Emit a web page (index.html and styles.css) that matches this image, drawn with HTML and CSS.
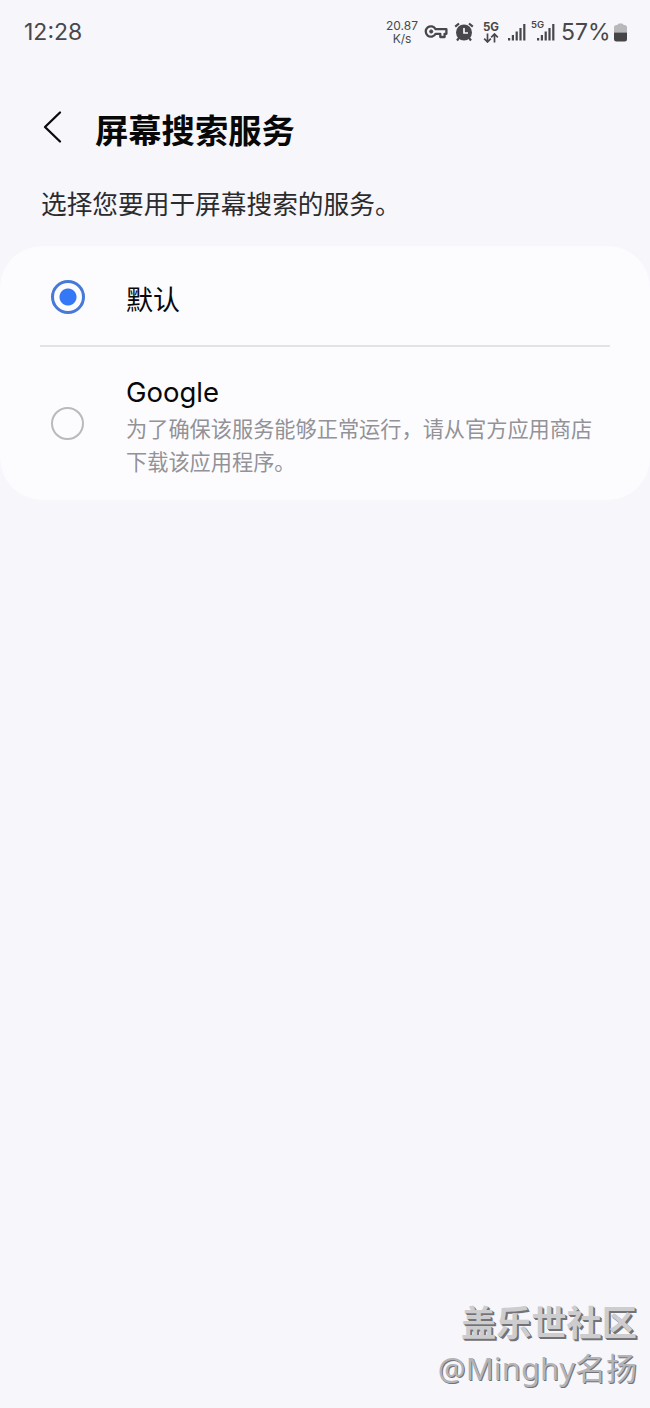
FILE: index.html
```html
<!DOCTYPE html>
<html lang="zh-CN">
<head>
<meta charset="utf-8">
<title>屏幕搜索服务</title>
<link rel="stylesheet" href="styles.css">
</head>
<body>
<div class="screen">
  <header class="status">
    <span class="clock">12:28</span>
    <div class="indicators">
      <div class="speed"><span>20.87</span><span>K/s</span></div>
      <svg class="key" width="24" height="16" viewBox="0 0 24 16" fill="none" stroke="#48484b" stroke-width="2.3">
        <path d="M11.600 5.2H22.4V9.8H20.6V13H16.3V9.8H11.600A5.2 5.2 0 1 1 11.600 5.2Z" stroke-linejoin="round"/>
        <circle cx="7.200" cy="7.5" r="1.6" fill="#48484b" stroke-width="1"/>
      </svg>
      <svg class="alarm" width="20" height="20" viewBox="0 0 20 20" fill="none" stroke="#48484b">
        <circle cx="10" cy="10.500" r="8" fill="#48484b" stroke="none"/>
        <path d="M1.2 4.6 5 1.5M18.8 4.6 15 1.5M5 15.8 3 18.5M15 15.8 17 18.5" stroke-width="2.2"/>
        <path d="M10 6V11H14" stroke="#f6f6fb" stroke-width="1.7"/>
      </svg>
      <div class="network">
        <span>5G</span>
        <svg width="16" height="10" viewBox="0 0 16 10" fill="none" stroke="#48484b" stroke-width="1.7"><path d="M4.5.5V8.7M1.2 5.7 4.5 9 7.8 5.7M11.5 9.5V1.3M8.2 4.3 11.5 1 14.8 4.3"/></svg>
      </div>
      <svg class="signal" width="18" height="18" viewBox="0 0 18 18" fill="#48484b"><path d="M0 15h2.2v2.5H0zM3.8 12H6v5.5H3.8zM7.6 8.5h2.2v9H7.6zM11.4 5h2.2v12.5h-2.2zM15.2 1h2.2v16.5h-2.2z"/></svg>
      <div class="second-signal">
        <span class="tag">5G</span>
        <svg width="18" height="18" viewBox="0 0 18 18" fill="#48484b"><path d="M0 15h2.2v2.5H0zM3.8 12H6v5.5H3.8zM7.6 8.5h2.2v9H7.6zM11.4 5h2.2v12.5h-2.2zM15.2 1h2.2v16.5h-2.2z"/></svg>
      </div>
      <span class="percent">57%</span>
      <svg class="battery" width="13" height="19" viewBox="0 0 13 19"><path d="M3.5 2Q3.5.5 5 .5H8Q9.500 .5 9.500 2H10.500Q13 2 13 4.500V9.500H0V4.500Q0 2 2.500 2Z" fill="#b8b8bb"/><path d="M0 9.500H13V16Q13 18.500 10.500 18.500H2.500Q0 18.500 0 16Z" fill="#454548"/></svg>
    </div>
  </header>
  <div class="titlebar">
    <svg width="20" height="34" viewBox="0 0 20 34" fill="none" stroke="#0a0a0a" stroke-width="2.3" stroke-linecap="round" stroke-linejoin="round"><path d="M17 2.500 2 17 17 31.500"/></svg>
    <h1>屏幕搜索服务</h1>
  </div>
  <p class="intro">选择您要用于屏幕搜索的服务。</p>
  <main class="card">
    <div class="option first">
      <span class="radio selected"></span>
      <span class="name">默认</span>
    </div>
    <div class="option second">
      <span class="radio"></span>
      <div class="details">
        <span class="latin">Google</span>
        <p>为了确保该服务能够正常运行，请从官方应用商店<br>下载该应用程序。</p>
      </div>
    </div>
  </main>
  <footer class="watermark">
    <span class="community">盖乐世社区</span>
    <span class="author">@Minghy名扬</span>
  </footer>
</div>
</body>
</html>
```
FILE: styles.css
```css
* { box-sizing: border-box; }
body { margin: 0; background: #f6f6fb; font-family: Inter, "Noto Sans CJK SC", sans-serif; }
h1, p { margin: 0; }
svg { display: block; flex: none; }
.screen { width: 650px; height: 1408px; display: flex; flex-direction: column; white-space: nowrap; overflow: hidden; }
.status { height: 64px; display: flex; justify-content: space-between; align-items: center; padding: 0 23px 0 24px; color: #48484b; }
.clock { font-size: 23px; line-height: 28px; }
.indicators { display: flex; align-items: center; }
.speed { width: 34px; display: flex; flex-direction: column; align-items: center; font-size: 12px; line-height: 13px; margin-right: 5px; padding-bottom: 1px; }
.key { margin-right: 6px; }
.alarm { margin-right: 9px; }
.network { width: 16px; display: flex; flex-direction: column; align-items: center; margin-right: 9px; font-size: 11.500px; line-height: 11px; font-weight: 700; }
.signal { margin-right: 5px; }
.second-signal { position: relative; width: 24px; display: flex; justify-content: flex-end; margin-right: 6px; }
.tag { position: absolute; left: 0; top: -3px; font-size: 9.500px; line-height: 10px; font-weight: 600; background: #f6f6fb; }
.percent { font-size: 23px; line-height: 28px; width: 48px; margin-right: 5px; }
.titlebar { height: 125px; display: flex; align-items: center; padding: 0 43px; gap: 32px; }
.titlebar h1 { margin-top: 4px; font: 700 33.300px/48px "Noto Sans CJK SC", sans-serif; color: #080808; }
.intro { height: 57px; padding-left: 41px; font: 25.700px/28px "Noto Sans CJK SC", sans-serif; color: #2b2b2e; }
.card { height: 254px; border-radius: 42px; background: #fcfcff; padding: 0 40px; }
.option { display: flex; padding-left: 11px; }
.first { height: 101px; padding-top: 2px; align-items: center; border-bottom: 2px solid #e3e3e6; }
.second { height: 153px; padding-top: 27px; }
.radio { flex: none; width: 33px; height: 33px; margin-right: 42px; border: 2px solid #b9b9be; border-radius: 50%; }
.second .radio { margin-top: 33px; }
.selected { width: 34px; height: 34px; margin-right: 41px; border: 3px solid #4679d8; background: radial-gradient(circle, #3478f6 8px, transparent 9px); }
.name { padding-top: 4px; font: 27px/40px "Noto Sans CJK SC", sans-serif; color: #080808; }
.details { display: flex; flex-direction: column; }
.latin { font-size: 27.500px; line-height: 36px; color: #080808; }
.details p { padding-top: 1px; font: 21.200px/33px "Noto Sans CJK SC", sans-serif; color: #929297; }
.watermark { margin-top: auto; height: 110px; padding-right: 13px; display: flex; flex-direction: column; align-items: flex-end; }
.community { font: 700 35.200px/46px "Noto Sans CJK SC", sans-serif; color: #cdcdcf; text-shadow: 1px 1px #737377, 2px 2px #737377; }
.author { font: 31px/49px "Noto Sans", "Noto Sans CJK SC", sans-serif; color: #b4b4b8; text-shadow: 1px 1px #737377; }
```
